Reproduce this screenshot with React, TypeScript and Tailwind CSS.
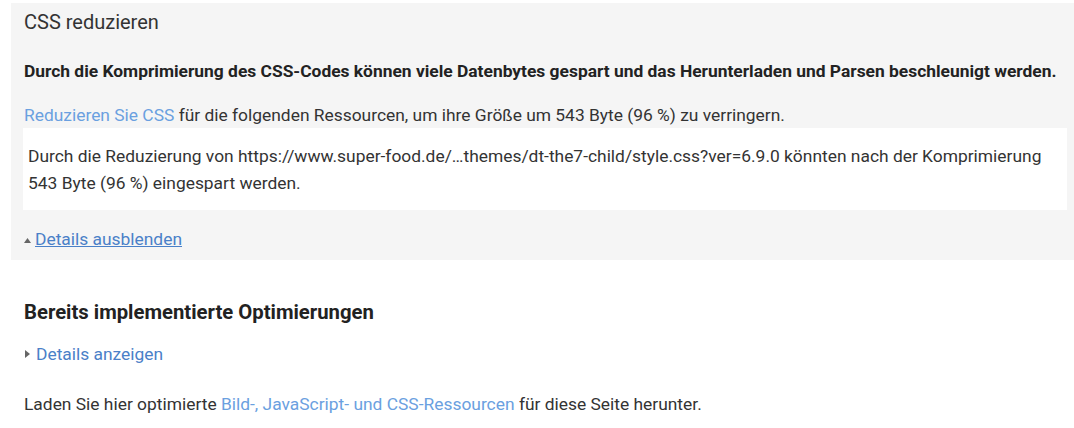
import React from "react";

export default function App() {
  return (
    <div className="w-[1074px] h-[428px] bg-white text-[#333] font-['Roboto',sans-serif] overflow-hidden">
      <div className="pt-[3px] pl-[11px]">
        <div className="bg-[#f5f5f5] pl-[13px] pr-[7px] pt-[7px] pb-[9px]">
          <div className="text-[20px] leading-[24px] text-[#333]">CSS reduzieren</div>
          <div className="mt-[25px] text-[17.4px] leading-[24px] font-bold text-[#222] whitespace-nowrap">
            Durch die Komprimierung des CSS-Codes können viele Datenbytes gespart und das Herunterladen und Parsen beschleunigt werden.
          </div>
          <div className="mt-[20px] text-[17.4px] leading-[24px]">
            <span className="text-[#6aa0e0]">Reduzieren Sie CSS</span> für die folgenden Ressourcen, um ihre Größe um 543 Byte (96 %) zu verringern.
          </div>
          <div className="mt-[1px] -ml-[1px] bg-white pl-[5px] pr-[12px] pt-[15px] pb-[13px] text-[17.4px] leading-[27px]">
            Durch die Reduzierung von https://www.super-food.de/…themes/dt-the7-child/style.css?ver=6.9.0 könnten nach der Komprimierung 543 Byte (96 %) eingespart werden.
          </div>
          <div className="mt-[17px] flex items-center text-[17.4px] leading-[24px]">
            <svg width="7" height="5" viewBox="0 0 7 5" className="mr-[4px] mt-[3px]"><path d="M0 5 L3.5 0 L7 5 Z" fill="#666" /></svg>
            <span className="text-[#4a80c8] underline">Details ausblenden</span>
          </div>
        </div>
      </div>
      <div className="pl-[24px] pt-[38px]">
        <div className="text-[20.3px] leading-[28px] font-bold text-[#222]">Bereits implementierte Optimierungen</div>
        <div className="mt-[16px] flex items-center text-[17.4px] leading-[24px]">
          <svg width="5" height="8" viewBox="0 0 5 8" className="mr-[6px] ml-[1px]"><path d="M0 0 L5 4 L0 8 Z" fill="#666" /></svg>
          <span className="text-[#4a80c8]">Details anzeigen</span>
        </div>
        <div className="mt-[26px] text-[17.4px] leading-[24px]">
          Laden Sie hier optimierte <span className="text-[#6aa0e0]">Bild-, JavaScript- und CSS-Ressourcen</span> für diese Seite herunter.
        </div>
      </div>
    </div>
  );
}
